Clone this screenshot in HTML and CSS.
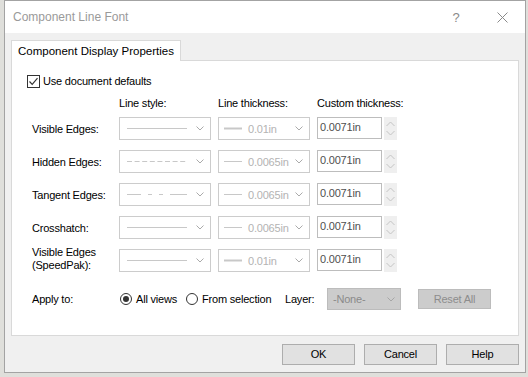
FILE: index.html
```html
<!DOCTYPE html>
<html lang="en">
<head>
  <meta charset="UTF-8">
  <title>Component Line Font</title>
  <link rel="stylesheet" href="styles.css">
</head>
<body>
  <div class="dialog">
    <div class="titlebar">
      <span class="title">Component Line Font</span>
      <span class="tb-btn">?</span>
      <span class="tb-btn">
        <svg width="11" height="11" viewBox="0 0 11 11"><path d="M0.5 0.5 L10.5 10.5 M10.5 0.5 L0.5 10.5" stroke="#8a8a8a" stroke-width="1"/></svg>
      </span>
    </div>

    <div class="content">
      <div class="tabs">
        <div class="tab">Component Display Properties</div>
      </div>

      <div class="panel">
        <div class="check">
          <span class="box">
            <svg width="11" height="11" viewBox="0 0 11 11"><path d="M1.5 5.5 L4.2 8.3 L9.5 2.2" fill="none" stroke="#333" stroke-width="1.2"/></svg>
          </span>
          Use document defaults
        </div>

        <div class="row heads">
          <span></span>
          <span>Line style:</span>
          <span>Line thickness:</span>
          <span>Custom thickness:</span>
        </div>

        <div class="rows">
          <div class="row">
            <span class="lbl">Visible Edges:</span>
            <div class="combo">
              <svg class="sample" width="60" height="3"><line x1="0" y1="1.5" x2="60" y2="1.5" stroke="#c8c8c8"/></svg>
              <svg class="chev" width="8" height="5"><path d="M0.5 0.5 L4 4 L7.5 0.5" fill="none" stroke="#aaa"/></svg>
            </div>
            <div class="combo">
              <svg class="thick" width="18" height="3"><line x1="0" y1="1.5" x2="18" y2="1.5" stroke="#c8c8c8" stroke-width="2"/></svg>
              <span class="val">0.01in</span>
              <svg class="chev" width="8" height="5"><path d="M0.5 0.5 L4 4 L7.5 0.5" fill="none" stroke="#aaa"/></svg>
            </div>
            <div class="custom">
              <span class="num">0.0071in</span>
              <span class="spin">
                <svg width="9" height="6"><path d="M0.5 5 L4.5 1 L8.5 5" fill="none" stroke="#c4c4c4"/></svg>
                <svg width="9" height="6"><path d="M0.5 1 L4.5 5 L8.5 1" fill="none" stroke="#c4c4c4"/></svg>
              </span>
            </div>
          </div>

          <div class="row">
            <span class="lbl">Hidden Edges:</span>
            <div class="combo">
              <svg class="sample" width="60" height="3"><line x1="0" y1="1.5" x2="60" y2="1.5" stroke="#c8c8c8" stroke-dasharray="5 2.6"/></svg>
              <svg class="chev" width="8" height="5"><path d="M0.5 0.5 L4 4 L7.5 0.5" fill="none" stroke="#aaa"/></svg>
            </div>
            <div class="combo">
              <svg class="thick" width="18" height="3"><line x1="0" y1="1.5" x2="18" y2="1.5" stroke="#c8c8c8"/></svg>
              <span class="val">0.0065in</span>
              <svg class="chev" width="8" height="5"><path d="M0.5 0.5 L4 4 L7.5 0.5" fill="none" stroke="#aaa"/></svg>
            </div>
            <div class="custom">
              <span class="num">0.0071in</span>
              <span class="spin">
                <svg width="9" height="6"><path d="M0.5 5 L4.5 1 L8.5 5" fill="none" stroke="#c4c4c4"/></svg>
                <svg width="9" height="6"><path d="M0.5 1 L4.5 5 L8.5 1" fill="none" stroke="#c4c4c4"/></svg>
              </span>
            </div>
          </div>

          <div class="row">
            <span class="lbl">Tangent Edges:</span>
            <div class="combo">
              <svg class="sample" width="60" height="3"><path d="M0 1.5 H14 M21 1.5 H25 M32 1.5 H36 M43 1.5 H60" stroke="#c8c8c8"/></svg>
              <svg class="chev" width="8" height="5"><path d="M0.5 0.5 L4 4 L7.5 0.5" fill="none" stroke="#aaa"/></svg>
            </div>
            <div class="combo">
              <svg class="thick" width="18" height="3"><line x1="0" y1="1.5" x2="18" y2="1.5" stroke="#c8c8c8"/></svg>
              <span class="val">0.0065in</span>
              <svg class="chev" width="8" height="5"><path d="M0.5 0.5 L4 4 L7.5 0.5" fill="none" stroke="#aaa"/></svg>
            </div>
            <div class="custom">
              <span class="num">0.0071in</span>
              <span class="spin">
                <svg width="9" height="6"><path d="M0.5 5 L4.5 1 L8.5 5" fill="none" stroke="#c4c4c4"/></svg>
                <svg width="9" height="6"><path d="M0.5 1 L4.5 5 L8.5 1" fill="none" stroke="#c4c4c4"/></svg>
              </span>
            </div>
          </div>

          <div class="row">
            <span class="lbl">Crosshatch:</span>
            <div class="combo">
              <svg class="sample" width="60" height="3"><line x1="0" y1="1.5" x2="60" y2="1.5" stroke="#c8c8c8"/></svg>
              <svg class="chev" width="8" height="5"><path d="M0.5 0.5 L4 4 L7.5 0.5" fill="none" stroke="#aaa"/></svg>
            </div>
            <div class="combo">
              <svg class="thick" width="18" height="3"><line x1="0" y1="1.5" x2="18" y2="1.5" stroke="#c8c8c8"/></svg>
              <span class="val">0.0065in</span>
              <svg class="chev" width="8" height="5"><path d="M0.5 0.5 L4 4 L7.5 0.5" fill="none" stroke="#aaa"/></svg>
            </div>
            <div class="custom">
              <span class="num">0.0071in</span>
              <span class="spin">
                <svg width="9" height="6"><path d="M0.5 5 L4.5 1 L8.5 5" fill="none" stroke="#c4c4c4"/></svg>
                <svg width="9" height="6"><path d="M0.5 1 L4.5 5 L8.5 1" fill="none" stroke="#c4c4c4"/></svg>
              </span>
            </div>
          </div>

          <div class="row">
            <span class="lbl two">Visible Edges<br>(SpeedPak):</span>
            <div class="combo">
              <svg class="sample" width="60" height="3"><line x1="0" y1="1.5" x2="60" y2="1.5" stroke="#c8c8c8"/></svg>
              <svg class="chev" width="8" height="5"><path d="M0.5 0.5 L4 4 L7.5 0.5" fill="none" stroke="#aaa"/></svg>
            </div>
            <div class="combo">
              <svg class="thick" width="18" height="3"><line x1="0" y1="1.5" x2="18" y2="1.5" stroke="#c8c8c8" stroke-width="2"/></svg>
              <span class="val">0.01in</span>
              <svg class="chev" width="8" height="5"><path d="M0.5 0.5 L4 4 L7.5 0.5" fill="none" stroke="#aaa"/></svg>
            </div>
            <div class="custom">
              <span class="num">0.0071in</span>
              <span class="spin">
                <svg width="9" height="6"><path d="M0.5 5 L4.5 1 L8.5 5" fill="none" stroke="#c4c4c4"/></svg>
                <svg width="9" height="6"><path d="M0.5 1 L4.5 5 L8.5 1" fill="none" stroke="#c4c4c4"/></svg>
              </span>
            </div>
          </div>
        </div>

        <div class="apply">
          <span class="apply-lbl">Apply to:</span>
          <span class="radio on"></span><span class="opt first">All views</span>
          <span class="radio"></span><span class="opt second">From selection</span>
          <span class="layer-lbl">Layer:</span>
          <div class="layer">
            <span>-None-</span>
            <svg class="chev" width="8" height="5"><path d="M0.5 0.5 L4 4 L7.5 0.5" fill="none" stroke="#a6a6a6"/></svg>
          </div>
          <span class="reset">Reset All</span>
        </div>
      </div>

      <div class="buttons">
        <span class="btn">OK</span>
        <span class="btn">Cancel</span>
        <span class="btn">Help</span>
      </div>
    </div>
  </div>
</body>
</html>
```

FILE: styles.css
```css
body {
  margin: 0;
  width: 528px;
  height: 377px;
  overflow: hidden;
  background: #dfdfdb;
  font-family: "Liberation Sans", Arial, sans-serif;
  font-size: 11px;
  letter-spacing: -0.2px;
  color: #000;
  white-space: nowrap;
}

.dialog {
  margin-left: 4px;
  width: 522px;
  height: 373px;
  box-sizing: border-box;
  border: 1px solid #a3a3a3;
  background: #f0f0f0;
  display: flex;
  flex-direction: column;
}

.titlebar {
  height: 32px;
  background: #fff;
  display: flex;
  align-items: center;
  padding-left: 8px;
}

.title {
  flex: 1;
  font-size: 12px;
  letter-spacing: 0;
  color: #9a9a9a;
}

.tb-btn {
  width: 46px;
  height: 32px;
  display: flex;
  align-items: center;
  justify-content: center;
  color: #8a8a8a;
  font-size: 13px;
}

.content {
  flex: 1;
  padding: 7px 6px 0 6px;
}

.tabs {
  display: flex;
}

.tab {
  position: relative;
  z-index: 1;
  height: 21px;
  box-sizing: border-box;
  margin-bottom: -1px;
  padding: 0 6px;
  line-height: 20px;
  font-size: 11.5px;
  letter-spacing: 0;
  background: #fff;
  border: 1px solid #d9d9d9;
  border-bottom: none;
}

.panel {
  height: 276px;
  box-sizing: border-box;
  background: #fff;
  border: 1px solid #d9d9d9;
}

.check {
  margin: 13px 0 0 15px;
  height: 14px;
  line-height: 14px;
  display: flex;
  align-items: center;
  gap: 3px;
}

.box {
  width: 13px;
  height: 13px;
  box-sizing: border-box;
  border: 1px solid #333;
  display: flex;
  align-items: center;
  justify-content: center;
}

.row {
  display: grid;
  grid-template-columns: 80px 92px 92px 80px;
  column-gap: 7px;
  padding-left: 20px;
  align-items: center;
  height: 23px;
}

.heads {
  margin-top: 8px;
  height: 14px;
  line-height: 14px;
}

.rows {
  margin-top: 7px;
  display: flex;
  flex-direction: column;
  gap: 10px;
}

.lbl.two {
  line-height: 13px;
  align-self: start;
  margin-top: -3px;
}

.combo {
  height: 23px;
  box-sizing: border-box;
  border: 1px solid #cccccc;
  display: flex;
  align-items: center;
  padding: 0 6px 0 7px;
}

.combo .chev {
  margin-left: auto;
}

.thick {
  margin-left: -2px;
}

.val {
  margin-left: 6px;
  color: #b3b3b3;
}

.custom {
  display: flex;
  gap: 2px;
}

.num {
  width: 65px;
  height: 22px;
  box-sizing: border-box;
  border: 1px solid #bdbdbd;
  padding: 2px 0 0 2px;
  line-height: 15px;
  color: #4f4f4f;
}

.spin {
  width: 13px;
  height: 23px;
  background: #efefef;
  display: flex;
  flex-direction: column;
  align-items: center;
  justify-content: space-around;
  padding: 2px 0;
  box-sizing: border-box;
}

.apply {
  margin: 16px 0 0 20px;
  height: 22px;
  display: flex;
  align-items: center;
}

.apply-lbl {
  width: 88px;
}

.radio {
  width: 12px;
  height: 12px;
  box-sizing: border-box;
  border: 1px solid #333;
  border-radius: 50%;
  display: flex;
  align-items: center;
  justify-content: center;
}

.radio.on::after {
  content: "";
  width: 6px;
  height: 6px;
  border-radius: 50%;
  background: #333;
}

.opt {
  margin-left: 4px;
}

.opt.first {
  width: 50px;
}

.opt.second {
  width: 83px;
}

.layer-lbl {
  width: 42px;
}

.layer {
  width: 74px;
  height: 22px;
  box-sizing: border-box;
  border: 1px solid #bcbcbc;
  background: #cccccc;
  color: #8a8a8a;
  display: flex;
  align-items: center;
  padding: 0 5px 0 5px;
}

.layer .chev {
  margin-left: auto;
}

.reset {
  margin-left: 17px;
  width: 73px;
  height: 20px;
  box-sizing: border-box;
  border: 1px solid #bcbcbc;
  background: #cccccc;
  color: #8d8d8d;
  text-align: center;
  line-height: 18px;
}

.buttons {
  margin-top: 8px;
  display: flex;
  justify-content: flex-end;
  gap: 9px;
}

.btn {
  width: 73px;
  height: 21px;
  box-sizing: border-box;
  border: 1px solid #adadad;
  background: #e1e1e1;
  text-align: center;
  line-height: 19px;
}
```
